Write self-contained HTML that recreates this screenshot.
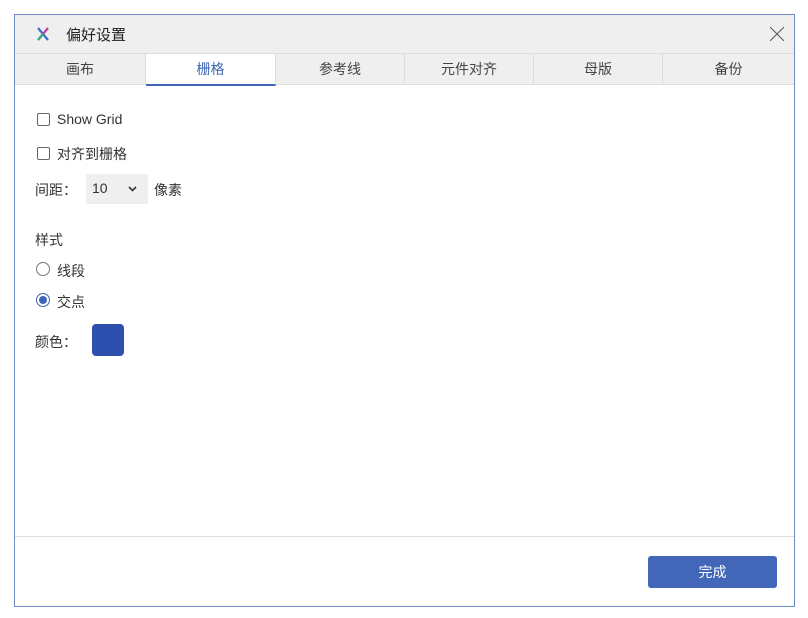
<!DOCTYPE html>
<html><head><meta charset="utf-8"><style>
body{margin:0;width:808px;height:618px;background:#fff;position:relative;overflow:hidden;font-family:"Liberation Sans","Noto Sans CJK SC",sans-serif;color:#333}
.dlg{position:absolute;left:14px;top:14px;width:781px;height:593px;border:1px solid #6d8cc4;background:#fff;box-sizing:border-box}
.title{position:absolute;left:0;top:0;width:100%;height:38px;background:#efefef;font-size:15px;color:#222}
.tabs{position:absolute;left:0;top:38px;width:100%;height:32px;background:#efefef;border-top:1px solid #ddd;border-bottom:1px solid #ddd;box-sizing:border-box}
.tab{position:absolute;top:0;height:31px;line-height:30px;text-align:center;font-size:14px;color:#444;border-right:1px solid #ddd;box-sizing:border-box}
.tab.act{background:#fff;color:#3d66b5;border-bottom:2px solid #3d66b5;height:32px}
.t{position:absolute;font-size:14px;color:#333}
.cb{position:absolute;width:11px;height:11px;border:1px solid #666;border-radius:2px}
.rd{position:absolute;width:12px;height:12px;border:1px solid #777;border-radius:50%}
</style></head><body>
<div class="dlg">
<div class="title">
<svg style="position:absolute;left:20px;top:11px" width="16" height="16" viewBox="0 0 16 16"><path d="M3 2 L13 14" stroke="#3a6fd0" stroke-width="2.2"/><path d="M13 2 L3 14" stroke="#c03aa0" stroke-width="2.2"/><path d="M8 8 L3 14" stroke="#30b070" stroke-width="2.2"/></svg>
<span style="position:absolute;left:51px;top:9px">偏好设置</span>
<svg style="position:absolute;left:755px;top:12px" width="14" height="14"><path d="M0 0L14 14M14 0L0 14" stroke="#555" stroke-width="1"/></svg>
</div>
<div class="tabs">
<div class="tab" style="left:0;width:131px">画布</div>
<div class="tab act" style="left:131px;width:130px">栅格</div>
<div class="tab" style="left:261px;width:129px">参考线</div>
<div class="tab" style="left:390px;width:129px">元件对齐</div>
<div class="tab" style="left:519px;width:129px">母版</div>
<div class="tab" style="left:648px;width:131px;border-right:none">备份</div>
</div>
<div class="cb" style="left:22px;top:98px"></div><span class="t" style="left:42px;top:96px">Show Grid</span>
<div class="cb" style="left:22px;top:132px"></div><span class="t" style="left:42px;top:129px">对齐到栅格</span>
<span class="t" style="left:20px;top:165px">间距：</span>
<div style="position:absolute;left:71px;top:159px;width:62px;height:30px;background:#efefef"></div>
<span class="t" style="left:77px;top:165px">10</span>
<svg style="position:absolute;left:113px;top:171px" width="9" height="6"><path d="M1 1L4.5 4.5L8 1" stroke="#333" stroke-width="1.6" fill="none"/></svg>
<span class="t" style="left:139px;top:165px">像素</span>
<span class="t" style="left:20px;top:215px">样式</span>
<div class="rd" style="left:21px;top:247px"></div><span class="t" style="left:42px;top:246px">线段</span>
<div class="rd" style="left:21px;top:278px;border-color:#3d66b5"><div style="position:absolute;left:2px;top:2px;width:8px;height:8px;border-radius:50%;background:#3d66b5"></div></div><span class="t" style="left:42px;top:277px">交点</span>
<span class="t" style="left:20px;top:317px">颜色：</span>
<div style="position:absolute;left:77px;top:309px;width:32px;height:32px;border-radius:4px;background:#2d4fae"></div>
<div style="position:absolute;left:0;top:521px;width:100%;height:1px;background:#ddd"></div>
<div style="position:absolute;left:633px;top:541px;width:129px;height:32px;border-radius:3px;background:#4267b8;color:#fff;font-size:14px;text-align:center;line-height:32px">完成</div>
</div>
</body></html>
